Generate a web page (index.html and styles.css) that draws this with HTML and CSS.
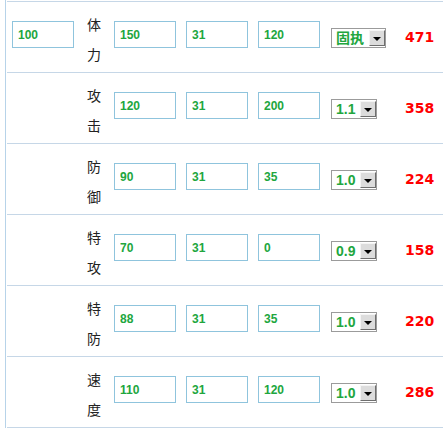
FILE: index.html
```html
<!DOCTYPE html>
<html lang="zh-CN">
<head>
  <meta charset="UTF-8">
  <title>能力值计算</title>
  <link rel="stylesheet" href="styles.css">
</head>
<body>
  <div class="panel">
    <div class="stat-row">
      <div class="cell-level"><input class="num-input" type="text" value="100"></div>
      <div class="stat-name">体力</div>
      <input class="num-input" type="text" value="150">
      <input class="num-input gap" type="text" value="31">
      <input class="num-input gap" type="text" value="120">
      <div class="cell-nature"><span class="fake-select"><span class="sel-text">固执</span><span class="sel-btn"></span></span></div>
      <div class="result">471</div>
    </div>
    <div class="stat-row">
      <div class="cell-level"></div>
      <div class="stat-name">攻击</div>
      <input class="num-input" type="text" value="120">
      <input class="num-input gap" type="text" value="31">
      <input class="num-input gap" type="text" value="200">
      <div class="cell-nature"><span class="fake-select"><span class="sel-text">1.1</span><span class="sel-btn"></span></span></div>
      <div class="result">358</div>
    </div>
    <div class="stat-row">
      <div class="cell-level"></div>
      <div class="stat-name">防御</div>
      <input class="num-input" type="text" value="90">
      <input class="num-input gap" type="text" value="31">
      <input class="num-input gap" type="text" value="35">
      <div class="cell-nature"><span class="fake-select"><span class="sel-text">1.0</span><span class="sel-btn"></span></span></div>
      <div class="result">224</div>
    </div>
    <div class="stat-row">
      <div class="cell-level"></div>
      <div class="stat-name">特攻</div>
      <input class="num-input" type="text" value="70">
      <input class="num-input gap" type="text" value="31">
      <input class="num-input gap" type="text" value="0">
      <div class="cell-nature"><span class="fake-select"><span class="sel-text">0.9</span><span class="sel-btn"></span></span></div>
      <div class="result">158</div>
    </div>
    <div class="stat-row">
      <div class="cell-level"></div>
      <div class="stat-name">特防</div>
      <input class="num-input" type="text" value="88">
      <input class="num-input gap" type="text" value="31">
      <input class="num-input gap" type="text" value="35">
      <div class="cell-nature"><span class="fake-select"><span class="sel-text">1.0</span><span class="sel-btn"></span></span></div>
      <div class="result">220</div>
    </div>
    <div class="stat-row last">
      <div class="cell-level"></div>
      <div class="stat-name">速度</div>
      <input class="num-input" type="text" value="110">
      <input class="num-input gap" type="text" value="31">
      <input class="num-input gap" type="text" value="120">
      <div class="cell-nature"><span class="fake-select"><span class="sel-text">1.0</span><span class="sel-btn"></span></span></div>
      <div class="result">286</div>
    </div>
  </div>
</body>
</html>
```

FILE: styles.css
```css
html, body { margin: 0; padding: 0; background: #fff; }
body { font-family: "Liberation Sans", Arial, sans-serif; }

.panel {
  margin-left: 5px;
  padding: 1px 0 0 1px;
  border-left: 1px solid #b7d3e9;
  min-height: 428px;
  box-sizing: border-box;
}

.stat-row {
  display: flex;
  align-items: center;
  height: 71px;
  border-top: 1px solid #c6d7e7;
  box-sizing: border-box;
  padding-left: 5px;
}
.stat-row.last { height: 72px; border-bottom: 1px solid #c6d7e7; }

.cell-level { width: 62px; display: flex; }

.stat-name {
  width: 40px;
  padding-top: 3px;
  font-family: "Noto Sans CJK SC", sans-serif;
  font-size: 14px;
  line-height: 30px;
  color: #222;
  text-align: center;
  word-break: break-all;
  box-sizing: border-box;
  padding-left: 13px;
  padding-right: 13px;
}

.num-input {
  width: 62px;
  height: 27px;
  margin: 0 0 5px 0;
  padding: 0 5px;
  box-sizing: border-box;
  border: 1px solid #8fc4dd;
  outline: none;
  background: #fff;
  font-family: "Liberation Sans", Arial, sans-serif;
  font-size: 12px;
  font-weight: bold;
  color: #21a63e;
}
.num-input.gap { margin-left: 10px; }

.cell-nature { width: 74px; padding-left: 11px; padding-top: 1px; box-sizing: border-box; }

.fake-select {
  display: inline-flex;
  align-items: center;
  height: 20px;
  box-sizing: border-box;
  border: 1px solid #9b9b9b;
  background: #fff;
}
.sel-text {
  padding: 0 5px 0 4px;
  font-size: 14px;
  font-weight: bold;
  line-height: 18px;
  color: #21a63e;
  font-family: "Liberation Sans", "Noto Sans CJK SC", sans-serif;
}
.sel-btn {
  position: relative;
  width: 16px;
  height: 16px;
  box-sizing: border-box;
  background: #dcdcdc;
  border: 1px solid;
  border-color: #f4f4f4 #6e6e6e #6e6e6e #f4f4f4;
}
.sel-btn::after {
  content: '';
  position: absolute;
  left: 3px;
  top: 6px;
  border-top: 4px solid #000;
  border-left: 4px solid transparent;
  border-right: 4px solid transparent;
}

.result {
  padding-left: 11px;
  font-family: "DejaVu Sans", Verdana, sans-serif;
  font-size: 14px;
  font-weight: bold;
  color: #ff0000;
}
```
